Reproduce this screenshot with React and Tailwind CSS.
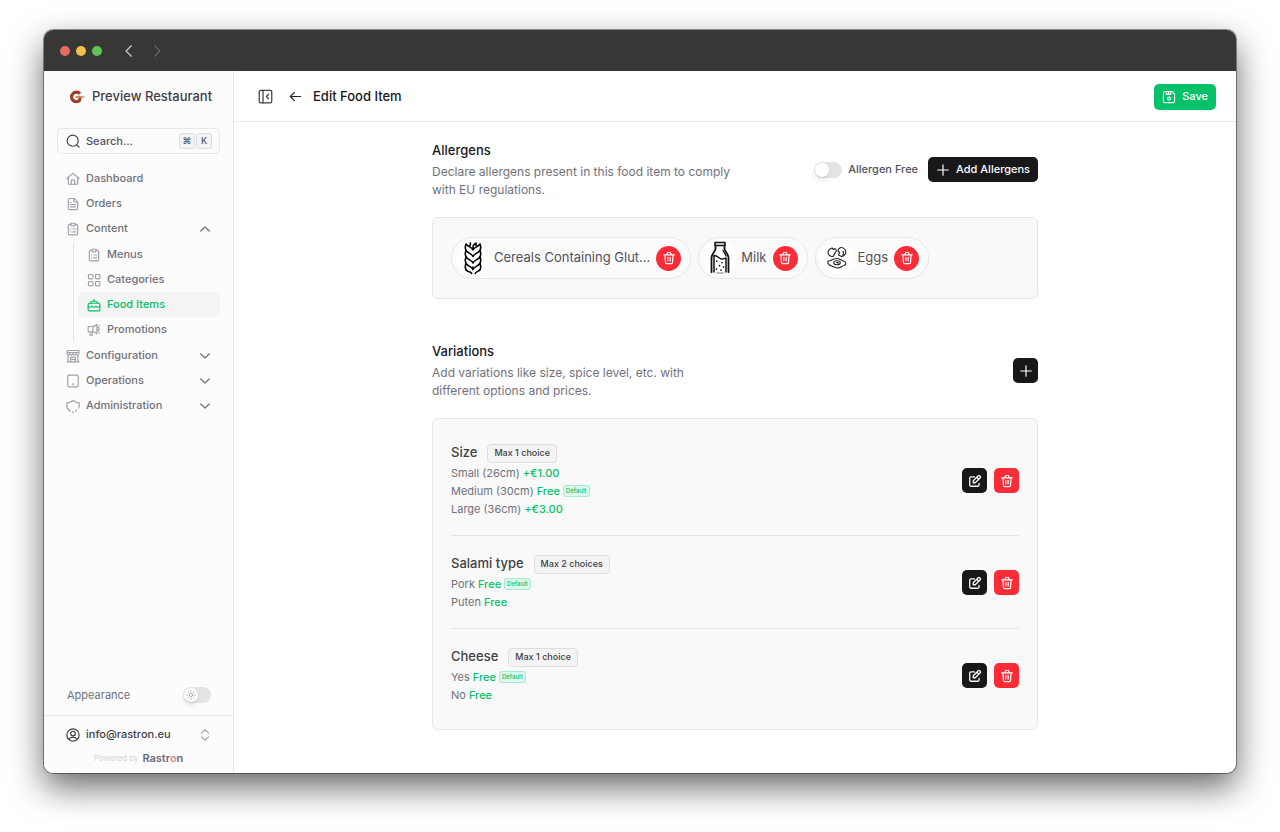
import React from "react";

function Icon({ size = 14, stroke = 2, className = "", children }) {
  return (
    <svg
      width={size}
      height={size}
      viewBox="0 0 24 24"
      fill="none"
      stroke="currentColor"
      strokeWidth={stroke}
      strokeLinecap="round"
      strokeLinejoin="round"
      className={"shrink-0 " + className}
      aria-hidden="true"
    >
      {children}
    </svg>
  );
}

const shapes = {
  home: (
    <>
      <path d="M1.500 11.500 10.600 3.200a2 2 0 0 1 2.800 0l9.100 8.300" />
      <path d="M4 10v9.500A1.500 1.500 0 0 0 5.500 21h13a1.500 1.500 0 0 0 1.500-1.500V10" />
      <path d="M9 21v-5.500a1.500 1.500 0 0 1 1.500-1.500h3a1.500 1.500 0 0 1 1.500 1.500V21" />
    </>
  ),
  file: (
    <>
      <path d="M14 2.500H6a2 2 0 0 0-2 2v15a2 2 0 0 0 2 2h12a2 2 0 0 0 2-2v-11z" />
      <path d="M13.500 3v4a2 2 0 0 0 2 2h4M8 9h1.500M8 13h8M8 17h8" />
    </>
  ),
  clipboard: (
    <>
      <path d="M8 4H6a2 2 0 0 0-2 2v14a2 2 0 0 0 2 2h12a2 2 0 0 0 2-2V6a2 2 0 0 0-2-2h-2" />
      <path d="M8.500 2.200h7V5a1.500 1.500 0 0 1-1.500 1.500h-4A1.500 1.500 0 0 1 8.500 5z" />
      <path d="M8 12h.5M12 12h4.500M8 17h.5M12 17h4.500" />
    </>
  ),
  grid: (
    <>
      <rect x="2.500" y="2.500" width="7.500" height="7.500" rx="1.500" />
      <rect x="14.500" y="2.500" width="7.500" height="7.500" rx="1.500" />
      <rect x="2.500" y="14.500" width="7.500" height="7.500" rx="1.500" />
      <rect x="14.500" y="14.500" width="7.500" height="7.500" rx="1.500" />
    </>
  ),
  cake: (
    <>
      <path d="M4 9h16a2 2 0 0 1 2 2v9a2 2 0 0 1-2 2H4a2 2 0 0 1-2-2v-9a2 2 0 0 1 2-2z" />
      <path d="M2 14c2 2.500 4.500 2.500 6.500 0 2 2.500 5 2.500 7 0 2 2.500 4.500 2.500 6.500 0M6 9c0-2 1.500-3.500 3.500-3.500h5C16.500 5.500 18 7 18 9M12 5V2.500" />
    </>
  ),
  megaphone: (
    <path d="M3.500 6H9c3 0 5.500-1.500 8-3.500v16C14.500 16.500 12 15 9 15H3.500A1.500 1.500 0 0 1 2 13.500v-6A1.500 1.500 0 0 1 3.500 6zM10 6v9M5 15v5a1.500 1.500 0 0 0 1.500 1.500h1A1.500 1.500 0 0 0 9 20v-5M17 7.500c5 0 5 6 0 6M21 4v1M21 16v1" />
  ),
  store: (
    <path d="M2 2.500h20v5a2.500 2.500 0 0 1-5 0 2.500 2.500 0 0 1-5 0 2.500 2.500 0 0 1-5 0 2.500 2.500 0 0 1-5 0zM2 6h20M3.500 10.500V22M20.500 10.500V22M1.500 22h21M8 22v-7a1 1 0 0 1 1-1h6a1 1 0 0 1 1 1v7M8 18h8" />
  ),
  tablet: (
    <>
      <rect x="3" y="2" width="18" height="20" rx="2" />
      <path d="M12 17.500v.2" strokeWidth="3" />
    </>
  ),
  shield: (
    <path d="M7 21C3.500 18.500 1.500 15 1.500 11V6.500C5.500 6.500 9 5 12 2.500c3 2.500 6.500 4 10.500 4V11c0 1.500-.3 3-.8 4.500M11 22.300l1 .4 1-.4M16.500 20.500l1.500-1.300" />
  ),
  trash: (
    <path d="M3 6.500h18M5 6.500l1 13A2 2 0 0 0 8 21.500h8a2 2 0 0 0 2-2l1-13M8.500 6l.8-2.700A1 1 0 0 1 10.300 2.500h3.400a1 1 0 0 1 1 .8l.8 2.700M10 11v6M14 11v6" />
  ),
  edit: (
    <>
      <path d="M11 5H5a2 2 0 0 0-2 2v12a2 2 0 0 0 2 2h12a2 2 0 0 0 2-2v-3" />
      <path d="M9 15v-3.500L17.500 3a1.800 1.800 0 0 1 2.500 0l1 1a1.800 1.800 0 0 1 0 2.500L12.500 15zM15 5.500 18.500 9" />
    </>
  ),
  save: (
    <>
      <path d="M5 2.500h12L21.500 7v12.500a2 2 0 0 1-2 2h-15a2 2 0 0 1-2-2V5A2.500 2.500 0 0 1 5 2.500z" />
      <path d="M7.500 3v4.500H15V3M11 4.500v1" />
      <circle cx="12" cy="14.500" r="2.500" />
    </>
  ),
  plus: <path d="M12 3v18M3 12h18" />,
  up: <path d="m3.500 16 8.500-8 8.500 8" />,
  down: <path d="m3.500 8 8.500 8 8.500-8" />,
  left: <path d="M16 3 7 12l9 9" />,
  right: <path d="m8 3 9 9-9 9" />,
  back: <path d="M21.500 12H3M10 4.500 2.500 12l7.500 7.500" />,
  panel: (
    <>
      <rect x="2" y="2" width="20" height="20" rx="2.500" />
      <path d="M8 2v20M17 8.500 13.500 12l3.500 3.500" />
    </>
  ),
  search: (
    <>
      <circle cx="11.500" cy="11.500" r="9.500" />
      <path d="m18.500 18.500 4 4" />
    </>
  ),
  user: (
    <>
      <circle cx="12" cy="12" r="10.500" />
      <circle cx="12" cy="9.500" r="4" />
      <path d="M5 19.500c1.500-3 4-4 7-4s5.500 1 7 4" />
    </>
  ),
  updown: <path d="m5 8 7-6.500L19 8M5 16l7 6.500 7-6.500" />,
  sun: (
    <>
      <circle cx="12" cy="12" r="4" />
      <path d="M12 2v2M12 20v2M2 12h2M20 12h2M5 5l1.400 1.400M17.600 17.600 19 19M5 19l1.400-1.400M17.600 6.400 19 5" />
    </>
  ),
};

function Wheat() {
  return (
    <svg width="18" height="34" viewBox="0 0 18 34" fill="none" stroke="#000" strokeWidth="1.600" strokeLinejoin="round" strokeLinecap="round" aria-hidden="true">
      <path d="M6 4.500 6.500 2M9 7.500V5.500C9 4 10.500 3.500 12 2v2.500" />
      {[9, 15.5, 22, 28.5].map((y) => (
        <path
          key={y}
          d={`M9 ${y}C8 ${y - 3} 4 ${y - 3} 2 ${y - 6}c-1 2.500-.8 5 .2 6.500M9 ${y}C10 ${y - 3} 14 ${y - 3} 16 ${y - 6}c1 2.500.8 5-.2 6.500`}
        />
      ))}
      <path d="M2.200 29c1.500 2.500 4.500 1 5.500 3.500M15.800 29c-1 1.500-4 1.500-4.500 3.500M9 28.500V26" />
    </svg>
  );
}

function Milk() {
  return (
    <svg width="20" height="34" viewBox="0 0 20 34" fill="none" stroke="#111" strokeWidth="1.300" strokeLinejoin="round" strokeLinecap="round" aria-hidden="true">
      <path d="M5 1.500h10v3H5z" strokeWidth="1.500" />
      <path d="M5.500 4.500v3.500c0 2-4 5-4 9v14M14.500 4.500v3.500c0 2 4 5 4 9v14" strokeWidth="1.800" />
      <path d="M4 31V14.500c3.500-.5 5 4 8.500 3.500 1.800 0 2.500-1 3.500-1v14" strokeWidth="1.500" />
      <path d="M13 9.500c1 2 2.500 3.500 3 5.500" />
      <path d="M6.500 32h7" stroke="#aaa" />
      <path d="M6.800 20v.1M12 21.500v.1M9.500 24.500v.1M13.500 26v.1M6.500 28v.1M11 29v.1" strokeWidth="1.700" />
    </svg>
  );
}

function Eggs() {
  return (
    <svg width="20" height="22" viewBox="0 0 20 22" fill="none" stroke="#222" strokeWidth="1.100" strokeLinejoin="round" strokeLinecap="round" aria-hidden="true">
      <path d="M3 2C.5 3.500.5 7 2.500 8.500c1.500 1 3 1.200 4 .5L8.500 5 9.500 3.500 8 1.500 6.500 2.500 5 1z" />
      <path d="M12 1.500 11 4l1.500 1.500L11.500 8l3 1.500c4-.5 5-4 3.500-7-1.500-2-4-2.500-6-1z" />
      <path d="M16 4.500c1 1 .5 3-.5 3.500" />
      <path d="M2 14c2 .2 3.500-2.500 7.500-2.500 3 0 4.500 2 7 2.500 3 1 3 3.500.5 4.500-2 .5-3.500 2.500-6.500 2.500-2.500 0-3-1.500-6-2C1 18.500-.5 14 2 14z" />
      <ellipse cx="10" cy="15.800" rx="3.300" ry="2" />
      <path d="M9.500 15.500c1-.5 2 0 1.500 1" />
    </svg>
  );
}

function Logo() {
  return (
    <svg width="16" height="14" viewBox="0 0 16 14" fill="none" className="shrink-0" aria-hidden="true">
      <path d="M11 3.800A4.800 4.800 0 1 0 11.200 9.800" stroke="#9a4128" strokeWidth="3.200" />
      <path d="M5.500 7 9 5.600 15.500 6.600v1L9.500 8.500z" fill="#c98570" />
      <path d="M9.500 8h3.200l-.9 2.800-2-1z" fill="#9a4128" />
    </svg>
  );
}

const rowBase = "flex h-[25px] w-full items-center rounded-[5px] text-left text-[11px] font-medium";

function NavLink({ icon, label, active }) {
  return (
    <a
      href="#"
      aria-current={active ? "page" : undefined}
      className={rowBase + " gap-[6px] px-[9px] " + (active ? "bg-[#f4f4f4] text-[#05c168]" : "text-[#71717b]")}
    >
      <Icon className={active ? "" : "text-[#9f9fa9]"}>{shapes[icon]}</Icon>
      {label}
    </a>
  );
}

function NavGroup({ icon, label, open }) {
  return (
    <button type="button" aria-expanded={!!open} className={rowBase + " gap-[6px] px-[9px] text-[#71717b]"}>
      <Icon className="text-[#9f9fa9]">{shapes[icon]}</Icon>
      <span className="flex-1">{label}</span>
      <Icon size={12} stroke={2.500}>{shapes[open ? "up" : "down"]}</Icon>
    </button>
  );
}

function Kbd({ children }) {
  return (
    <kbd className="flex h-4 w-4 items-center justify-center rounded-[3px] border border-[#dedee1] bg-[#f4f4f5] font-[Inter,'DejaVu_Sans',sans-serif] text-[9px] font-medium text-[#52525c]">
      {children}
    </kbd>
  );
}

function Toggle({ id, children }) {
  return (
    <span className="relative flex">
      <input
        id={id}
        type="checkbox"
        role="switch"
        className="h-4 w-7 appearance-none rounded-full bg-[#e4e4e7] before:mt-px before:ml-px before:block before:h-[14px] before:w-[14px] before:rounded-full before:bg-white before:shadow-md"
      />
      {children}
    </span>
  );
}

function Sidebar() {
  return (
    <aside className="flex w-[190px] shrink-0 flex-col border-r border-[#e8e8ea] bg-[#fcfcfc]">
      <div className="flex h-[51px] items-center gap-[7px] pl-[25px] text-[13px] font-medium whitespace-nowrap text-[#3f3f46]">
        <Logo />
        Preview Restaurant
      </div>
      <label className="mx-[13px] mt-[6px] flex h-[26px] items-center gap-[6px] rounded-[5px] border border-[#e7e7e9] pr-[7px] pl-2">
        <Icon className="text-[#3f3f46]">{shapes.search}</Icon>
        <input
          type="text"
          aria-label="Search"
          placeholder="Search..."
          className="w-0 min-w-0 flex-1 bg-transparent text-[11px] font-medium outline-none placeholder:text-[#52525c]"
        />
        <span className="flex gap-px">
          <Kbd>⌘</Kbd>
          <Kbd>K</Kbd>
        </span>
      </label>
      <nav className="mx-[13px] mt-3" aria-label="Main">
        <NavLink icon="home" label="Dashboard" />
        <NavLink icon="file" label="Orders" />
        <NavGroup icon="clipboard" label="Content" open />
        <div className="my-px ml-4 border-l border-[#e7e7e9] pl-1">
          <NavLink icon="clipboard" label="Menus" />
          <NavLink icon="grid" label="Categories" />
          <NavLink icon="cake" label="Food Items" active />
          <NavLink icon="megaphone" label="Promotions" />
        </div>
        <NavGroup icon="store" label="Configuration" />
        <NavGroup icon="tablet" label="Operations" />
        <NavGroup icon="shield" label="Administration" />
      </nav>
      <div className="mt-auto flex items-center justify-between pr-[22px] pb-3 pl-[23px]">
        <label htmlFor="appearance" className="text-[11px] text-[#71717b]">Appearance</label>
        <Toggle id="appearance">
          <Icon size={10} className="pointer-events-none absolute top-[3px] left-[3px] text-[#9f9fa9]">{shapes.sun}</Icon>
        </Toggle>
      </div>
      <div className="border-t border-[#e8e8ea] px-[13px] pt-[6px] pb-2">
        <button type="button" className={rowBase + " gap-[6px] px-[9px] text-[#3f3f46]"}>
          <Icon>{shapes.user}</Icon>
          <span className="flex-1">info@rastron.eu</span>
          <Icon size={12} className="text-[#71717b]">{shapes.updown}</Icon>
        </button>
        <p className="mt-1 flex items-center justify-center gap-1 text-[8px] leading-[14px] text-[#d4d4d8]">
          Powered by
          <span className="text-[11px] font-semibold text-[#6b6b73]">
            Rastr<span className="text-[#dc8f84]">o</span>n
          </span>
        </p>
      </div>
    </aside>
  );
}

function Chip({ picture, label }) {
  return (
    <li className="flex h-[42px] items-center rounded-full border border-[#e7e7e9] bg-[#fbfbfb] pr-[9px] pl-1">
      <span className="flex h-[34px] w-[34px] items-center justify-center rounded-full bg-white">{picture}</span>
      <span className="mr-[6px] ml-1 text-[13px] whitespace-nowrap text-[#52525c]">{label}</span>
      <button type="button" aria-label={"Remove " + label} className="flex h-[25px] w-[25px] items-center justify-center rounded-full bg-[#fb2c36] text-white">
        <Icon>{shapes.trash}</Icon>
      </button>
    </li>
  );
}

const squareButton = "flex h-[25px] w-[25px] items-center justify-center rounded-[5px] text-white";

function Variation({ name, max, options }) {
  return (
    <li className="flex items-center justify-between border-b border-[#e4e4e7] pt-[18px] pb-[17px] last:border-0">
      <div>
        <div className="flex h-5 items-center gap-[10px]">
          <h3 className="text-[13px] font-medium text-[#3f3f46]">{name}</h3>
          <span className="flex h-[19px] items-center rounded-[4px] border border-[#dedee1] bg-[#f4f4f5] px-[6px] text-[9px] font-medium text-[#3f3f46]">
            {max}
          </span>
        </div>
        <ul className="mt-px">
          {options.map(([label, price, isDefault]) => (
            <li key={label} className="flex items-center gap-[3px] text-[11px] leading-[18px] text-[#71717b]">
              {label} <span className="font-medium text-[#05c168]">{price}</span>
              {isDefault && (
                <span className="flex h-3 items-center rounded-[3px] border border-[#a8ebc9] bg-[#dcf8ea] px-[2px] text-[6px] leading-none font-medium text-[#05c168]">
                  Default
                </span>
              )}
            </li>
          ))}
        </ul>
      </div>
      <div className="flex gap-[7px]">
        <button type="button" aria-label={"Edit " + name} className={squareButton + " bg-[#18181b]"}>
          <Icon stroke={2.200}>{shapes.edit}</Icon>
        </button>
        <button type="button" aria-label={"Delete " + name} className={squareButton + " bg-[#fb2c36]"}>
          <Icon>{shapes.trash}</Icon>
        </button>
      </div>
    </li>
  );
}

const variations = [
  {
    name: "Size",
    max: "Max 1 choice",
    options: [["Small (26cm)", "+€1.00"], ["Medium (30cm)", "Free", true], ["Large (36cm)", "+€3.00"]],
  },
  { name: "Salami type", max: "Max 2 choices", options: [["Pork", "Free", true], ["Puten", "Free"]] },
  { name: "Cheese", max: "Max 1 choice", options: [["Yes", "Free", true], ["No", "Free"]] },
];

function SectionText({ title, children, className }) {
  return (
    <div className={className}>
      <h2 className="text-[13px] leading-5 font-medium text-[#18181b]">{title}</h2>
      <p className="mt-[3px] text-[12px] leading-[18px] text-[#71717b]">{children}</p>
    </div>
  );
}

function Content() {
  return (
    <main className="mx-auto w-full max-w-[606px] flex-1 pt-[18px] pb-[43px]">
      <section>
        <div className="flex items-center justify-between">
          <SectionText title="Allergens" className="w-[300px]">
            Declare allergens present in this food item to comply with EU regulations.
          </SectionText>
          <div className="flex items-center gap-[10px]">
            <div className="flex items-center gap-[6px]">
              <Toggle id="allergen-free" />
              <label htmlFor="allergen-free" className="text-[11px] font-medium text-[#52525c]">Allergen Free</label>
            </div>
            <button type="button" className="flex h-[25px] items-center gap-[6px] rounded-[5px] bg-[#18181b] px-2 text-[11px] font-medium text-white">
              <Icon>{shapes.plus}</Icon>
              Add Allergens
            </button>
          </div>
        </div>
        <ul className="mt-[18px] flex flex-wrap gap-[7px] rounded-[6px] border border-[#e7e7e9] bg-[#f9f9f9] px-[18px] py-[19px]">
          <Chip picture={<Wheat />} label="Cereals Containing Glut..." />
          <Chip picture={<Milk />} label="Milk" />
          <Chip picture={<Eggs />} label="Eggs" />
        </ul>
      </section>
      <section className="mt-[42px]">
        <div className="flex items-center justify-between">
          <SectionText title="Variations" className="w-[260px]">
            Add variations like size, spice level, etc. with different options and prices.
          </SectionText>
          <button type="button" aria-label="Add variation" className={squareButton + " bg-[#18181b]"}>
            <Icon>{shapes.plus}</Icon>
          </button>
        </div>
        <ul className="mt-[18px] rounded-[6px] border border-[#e7e7e9] bg-[#f9f9f9] px-[18px] pt-[6px] pb-2">
          {variations.map((v) => (
            <Variation key={v.name} {...v} />
          ))}
        </ul>
      </section>
    </main>
  );
}

export default function App() {
  return (
    <div className="flex min-h-screen flex-col bg-white px-11 pt-[30px] pb-[59px] font-[Inter,'Liberation_Sans',sans-serif]">
      <div className="flex flex-1 flex-col overflow-hidden rounded-[9px] bg-white shadow-[0_0_0_1px_rgba(0,0,0,0.4),0_14px_34px_rgba(0,0,0,0.6)]">
        <div className="flex h-[41px] items-center bg-[#373735] px-4">
          <div className="flex gap-[6px]">
            <span className="h-[10px] w-[10px] rounded-full bg-[#ed6a5e]" />
            <span className="h-[10px] w-[10px] rounded-full bg-[#f5bf4f]" />
            <span className="h-[10px] w-[10px] rounded-full bg-[#61c554]" />
          </div>
          <div className="ml-5 flex gap-[14px]">
            <button type="button" aria-label="Back" className="text-[#cfcfce]"><Icon>{shapes.left}</Icon></button>
            <button type="button" aria-label="Forward" className="text-[#656563]"><Icon>{shapes.right}</Icon></button>
          </div>
        </div>
        <div className="flex flex-1">
          <Sidebar />
          <div className="flex min-w-0 flex-1 flex-col">
            <header className="flex h-[51px] items-center border-b border-[#e8e8ea] pt-px pr-5 pl-6">
              <button type="button" aria-label="Collapse sidebar" className="text-[#3f3f46]"><Icon size={15}>{shapes.panel}</Icon></button>
              <a href="#" aria-label="Go back" className="ml-4 text-[#27272a]"><Icon size={13} stroke={2.200}>{shapes.back}</Icon></a>
              <h1 className="ml-[11px] text-[13px] font-medium text-[#18181b]">Edit Food Item</h1>
              <button type="button" className="ml-auto flex h-[26px] items-center gap-[6px] rounded-[5px] bg-[#05c168] px-2 text-[11px] font-medium text-white">
                <Icon>{shapes.save}</Icon>
                Save
              </button>
            </header>
            <Content />
          </div>
        </div>
      </div>
    </div>
  );
}
